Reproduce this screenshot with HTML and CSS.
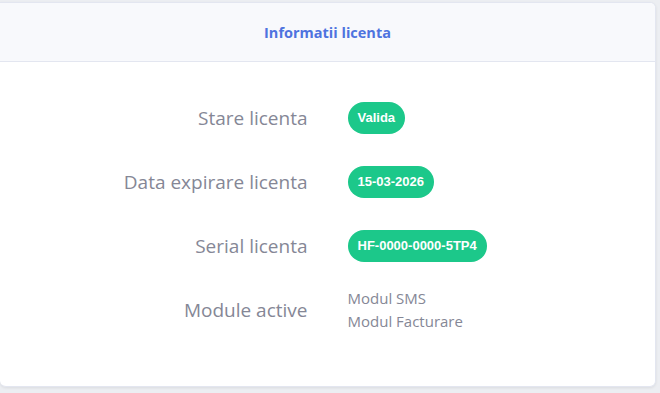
FILE: index.html
```html
<!DOCTYPE html>
<html lang="ro">
<head>
  <meta charset="UTF-8">
  <meta name="viewport" content="width=device-width, initial-scale=1.0">
  <title>Informatii licenta</title>
  <link rel="stylesheet" href="styles.css">
</head>
<body>
  <div class="card">
    <div class="card-header">
      <h6>Informatii licenta</h6>
    </div>

    <div class="card-body">
      <div class="info-row">
        <div class="info-label">Stare licenta</div>
        <div class="info-value"><span class="badge">Valida</span></div>
      </div>
      <div class="info-row">
        <div class="info-label">Data expirare licenta</div>
        <div class="info-value"><span class="badge">15-03-2026</span></div>
      </div>
      <div class="info-row">
        <div class="info-label">Serial licenta</div>
        <div class="info-value"><span class="badge">HF-0000-0000-5TP4</span></div>
      </div>
      <div class="info-row">
        <div class="info-label">Module active</div>
        <div class="info-value modules">
          <div>Modul SMS</div>
          <div>Modul Facturare</div>
        </div>
      </div>
    </div>
  </div>
</body>
</html>
```

FILE: styles.css
```css
body, html {
  margin: 0;
  padding: 0;
}

body {
  background: #eceef2;
  font-family: "Open Sans", "Noto Sans", sans-serif;
  color: #858796;
  padding: 2px 4px 7px 0;
}

.card {
  background: #fff;
  border: 1px solid #e3e6f0;
  border-left: 0;
  border-radius: 0 6px 6px 6px;
  box-shadow: 0 1px 3px rgb(0 0 0 / .08);
  overflow: hidden;
}

.card-header {
  background: #f8f9fc;
  border-bottom: 1px solid #e3e6f0;
  height: 58px;
  display: flex;
  align-items: center;
  justify-content: center;
}

.card-header h6 {
  margin: 0;
  font-size: 14.5px;
  font-weight: 700;
  color: #4e73df;
}

.card-body {
  padding: 24px 0 44px;
}

.info-row {
  display: grid;
  grid-template-columns: 1fr 1fr;
  column-gap: 40px;
  align-items: center;
  min-height: 64px;
}

.info-label {
  text-align: right;
  font-size: 19px;
}

.badge {
  display: inline-block;
  background: #1cc88a;
  color: #fff;
  font-family: "Liberation Sans", Arial, sans-serif;
  font-size: 13px;
  font-weight: 700;
  line-height: 32px;
  padding: 0 10px;
  border-radius: 16px;
}

.modules {
  font-size: 15px;
  line-height: 23px;
}
```
